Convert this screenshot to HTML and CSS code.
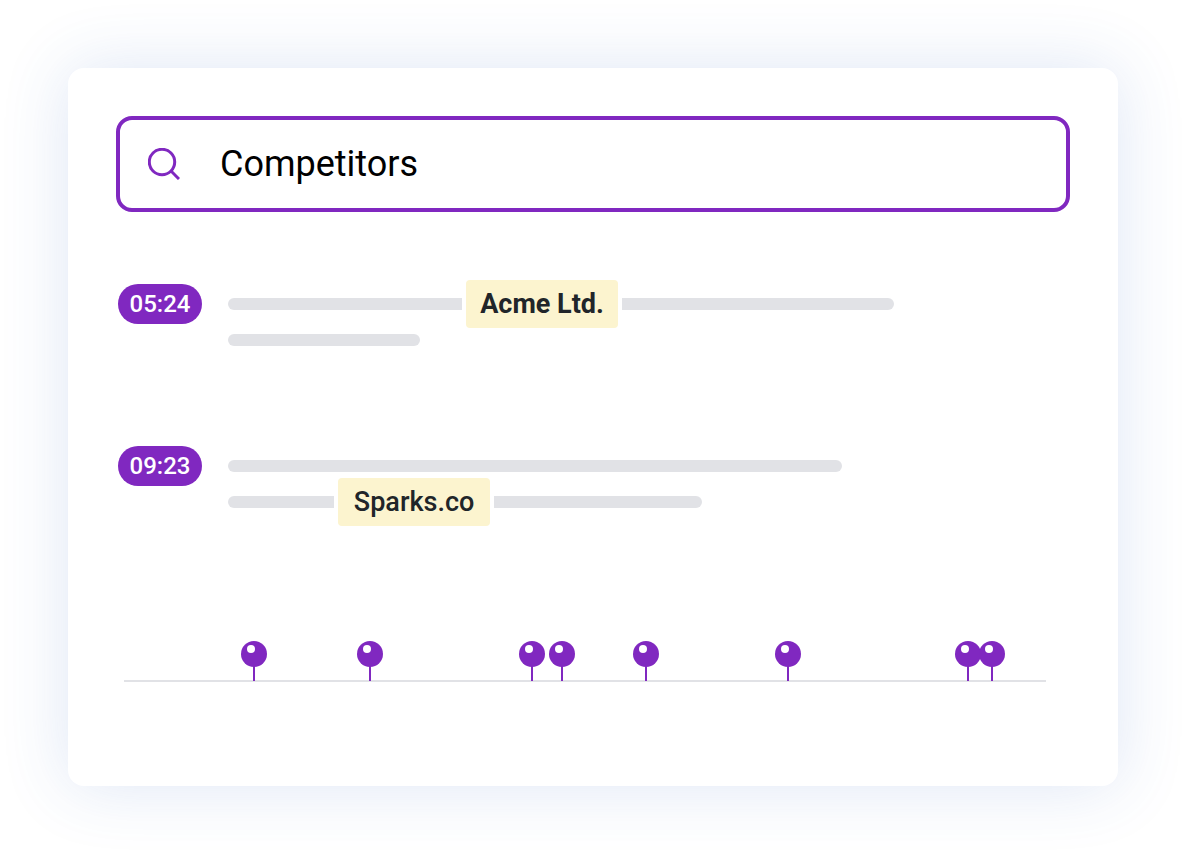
FILE: index.html
```
<!DOCTYPE html>
<html lang="en">
<head>
    <meta charset="UTF-8">
    <meta name="viewport" content="width=device-width, initial-scale=1.0">
    <title>Transcript Search</title>
    <link rel="stylesheet" href="styles.css">
</head>
<body>
    <main class="card">
        <label class="search">
            <svg class="search-icon" viewBox="0 0 32 32" fill="none" aria-hidden="true">
                <circle cx="14" cy="14" r="12.7" stroke="currentColor" stroke-width="3"/>
                <path d="M23 23L31 31" stroke="currentColor" stroke-width="3"/>
            </svg>
            <input type="text" class="search-input" value="Competitors" aria-label="Search">
        </label>

        <div class="results">
            <div class="result">
                <time class="timestamp">05:24</time>
                <div class="lines">
                    <div class="line">
                        <span class="bar bar-start" style="width: 27.8%"></span>
                        <mark class="match match-bold">Acme Ltd.</mark>
                        <span class="bar bar-end" style="width: 32.3%"></span>
                    </div>
                    <div class="line">
                        <span class="bar bar-start bar-end" style="width: 22.8%"></span>
                    </div>
                </div>
            </div>

            <div class="result">
                <time class="timestamp">09:23</time>
                <div class="lines">
                    <div class="line">
                        <span class="bar bar-start bar-end" style="width: 72.9%"></span>
                    </div>
                    <div class="line">
                        <span class="bar bar-start" style="width: 12.6%"></span>
                        <mark class="match">Sparks.co</mark>
                        <span class="bar bar-end" style="width: 24.7%"></span>
                    </div>
                </div>
            </div>
        </div>

        <!-- One pin for each mention in the recording -->
        <div class="timeline">
            <span class="pin" style="left: 14.1%"></span>
            <span class="pin" style="left: 26.7%"></span>
            <span class="pin" style="left: 44.3%"></span>
            <span class="pin" style="left: 47.5%"></span>
            <span class="pin" style="left: 56.6%"></span>
            <span class="pin" style="left: 72%"></span>
            <span class="pin" style="left: 91.5%"></span>
            <span class="pin" style="left: 94.1%"></span>
        </div>
    </main>
</body>
</html>
```
FILE: styles.css
```
* {
    margin: 0;
    padding: 0;
    box-sizing: border-box;
}

body {
    min-height: 100vh;
    padding: 68px;
    background: #fff;
    font-family: Roboto, 'Liberation Sans', sans-serif;
}

.card {
    padding: 48px 48px 104px;
    background: #fff;
    border-radius: 16px;
    box-shadow: 0 0 68px rgba(50, 100, 190, 0.16);
}

.search {
    display: flex;
    align-items: center;
    gap: 40px;
    height: 96px;
    padding: 0 28px;
    border: 4px solid #8028c0;
    border-radius: 16px;
}

.search-icon {
    flex: none;
    width: 32px;
    height: 32px;
    color: #8028c0;
}

.search-input {
    flex: 1;
    min-width: 0;
    border: none;
    outline: none;
    background: none;
    color: #000;
    font-family: inherit;
    font-size: 36px;
}

.results {
    display: flex;
    flex-direction: column;
    gap: 100px;
    margin-top: 72px;
}

.result {
    display: flex;
    align-items: flex-start;
    gap: 26px;
    padding-left: 2px;
}

.timestamp {
    flex: none;
    width: 84px;
    border-radius: 20px;
    background: #8028c0;
    color: #fff;
    font-size: 24px;
    font-weight: 500;
    line-height: 40px;
    text-align: center;
}

.lines {
    flex: 1;
    display: flex;
    flex-direction: column;
    gap: 24px;
    padding-top: 14px;
}

.line {
    display: flex;
    align-items: center;
    gap: 4px;
    height: 12px;
}

.bar {
    height: 12px;
    background: #e1e2e6;
}

.bar-start {
    border-top-left-radius: 6px;
    border-bottom-left-radius: 6px;
}

.bar-end {
    border-top-right-radius: 6px;
    border-bottom-right-radius: 6px;
}

.match {
    flex: none;
    width: 152px;
    border-radius: 4px;
    background: #fcf4cf;
    color: #212529;
    font-size: 27px;
    font-weight: 500;
    line-height: 48px;
    text-align: center;
}

.match-bold {
    font-weight: 700;
}

.timeline {
    position: relative;
    height: 41px;
    margin: 133px 24px 0 8px;
    border-bottom: 2px solid #e1e2e6;
}

.pin {
    position: absolute;
    top: 0;
    width: 26px;
    height: 26px;
    margin-left: -13px;
    border-radius: 50%;
    background: #8028c0;
}

.pin::before {
    content: '';
    position: absolute;
    top: 4px;
    left: 6px;
    width: 8px;
    height: 8px;
    border-radius: 50%;
    background: #fff;
}

.pin::after {
    content: '';
    position: absolute;
    top: 25px;
    left: 12px;
    width: 2px;
    height: 15px;
    background: #8028c0;
}
```
